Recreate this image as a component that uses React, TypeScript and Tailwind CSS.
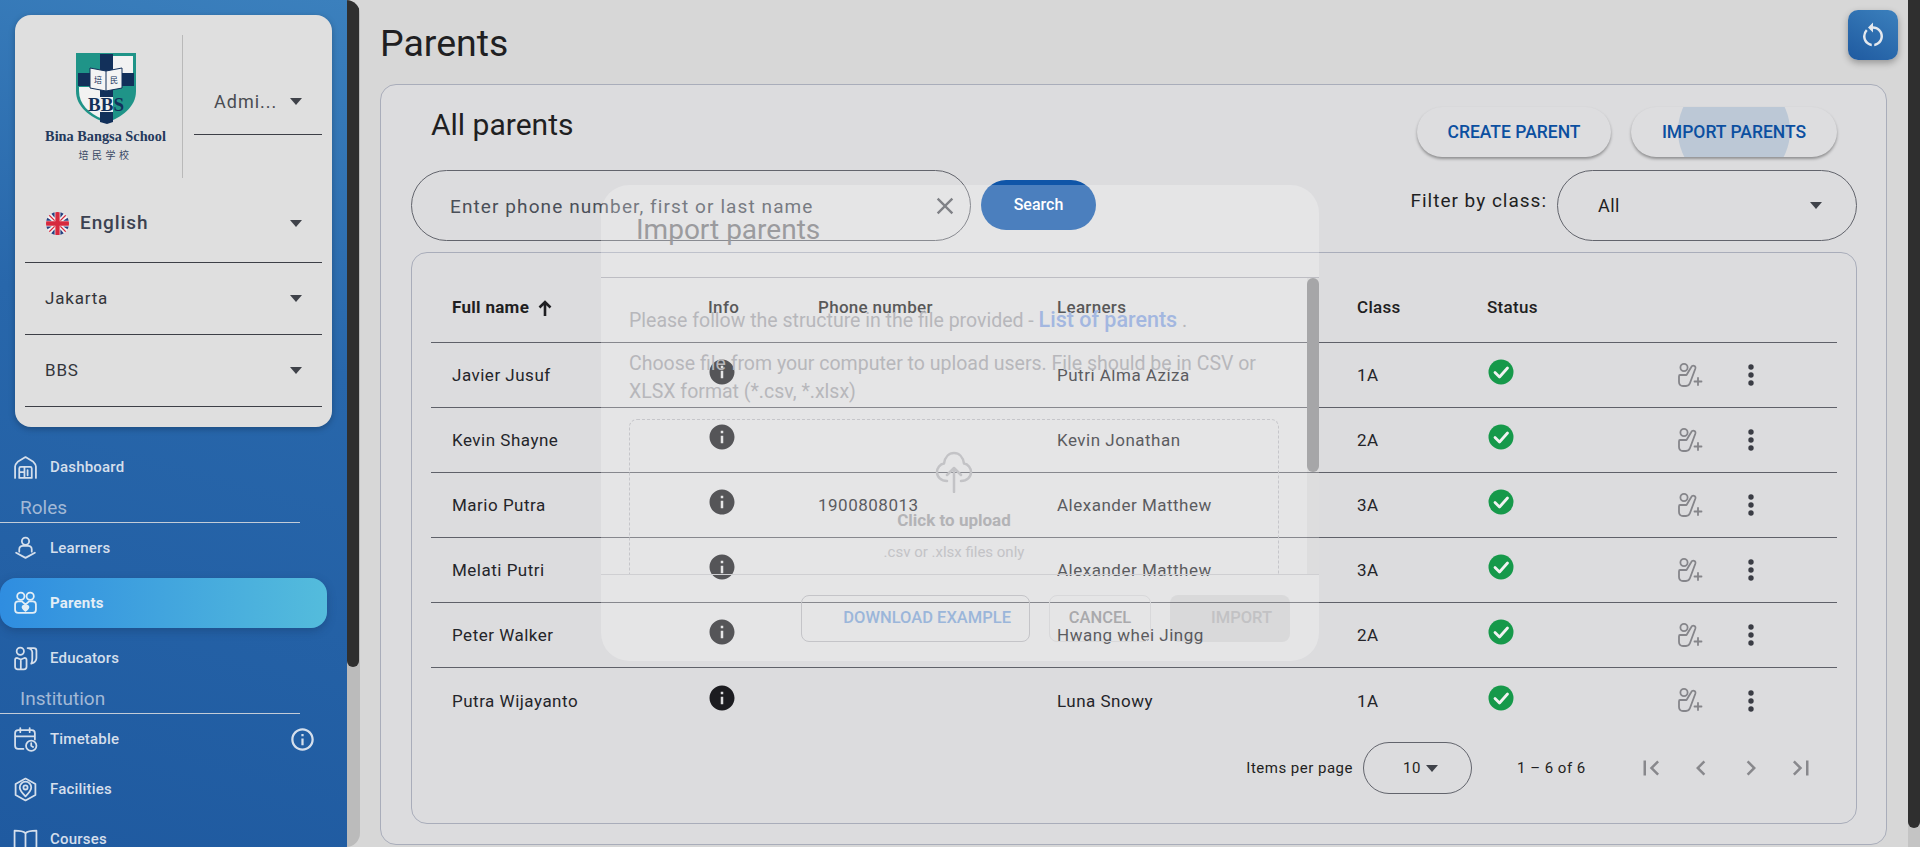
import React from "react"
import {
  MdChevronLeft,
  MdChevronRight,
  MdClose,
  MdFirstPage,
  MdInfo,
  MdLastPage,
  MdOutlineInfo,
  MdRestartAlt,
} from "react-icons/md"

const parents = [
  { name: "Javier Jusuf", phone: "", learner: "Putri Alma Aziza", cls: "1A" },
  { name: "Kevin Shayne", phone: "", learner: "Kevin Jonathan", cls: "2A" },
  { name: "Mario Putra", phone: "1900808013", learner: "Alexander Matthew", cls: "3A" },
  { name: "Melati Putri", phone: "", learner: "Alexander Matthew", cls: "3A" },
  { name: "Peter Walker", phone: "", learner: "Hwang whei Jingg", cls: "2A" },
  { name: "Putra Wijayanto", phone: "", learner: "Luna Snowy", cls: "1A" },
]

const Caret = ({ className = "" }: { className?: string }) => (
  <svg width="12" height="7" viewBox="0 0 12 7" className={`shrink-0 ${className}`}>
    <path d="M0 0h12L6 7z" fill="#3f4249" />
  </svg>
)

const Logo = () => (
  <div className="flex flex-col items-center">
    <svg width="62" height="72" viewBox="0 0 62 72">
      <path d="M1 1h60v38c0 16-14 26-30 32C15 65 1 55 1 39z" fill="#1f9488" />
      <path d="M34 4h24v18H34z" fill="#f2f2f2" />
      <path d="M4 35h24v32C14 62 4 52 4 39z" fill="#f2f2f2" />
      <path d="M25 2h13v68l-6 2-7-2z" fill="#12305a" />
      <path d="M3 21h56v13H3z" fill="#12305a" />
      <path d="M15 16l16 3 16-3v20l-16 3-16-3z" fill="#f4f4f4" stroke="#12305a" strokeWidth="1" />
      <path d="M31 19v20" stroke="#12305a" strokeWidth="1" />
      <text x="23" y="31" fontSize="8" textAnchor="middle" fill="#12305a" fontFamily="'Noto Sans CJK SC', serif">培</text>
      <text x="39" y="31" fontSize="8" textAnchor="middle" fill="#12305a" fontFamily="'Noto Sans CJK SC', serif">民</text>
      <rect x="25" y="45" width="13" height="15" fill="#f2f2f2" />
      <text x="31" y="59" fontSize="19" fontWeight="700" textAnchor="middle" fill="#12305a" fontFamily="'Liberation Serif', serif">BBS</text>
    </svg>
    <span className="mt-[3px] font-['Liberation_Serif',serif] text-[14.3px] leading-[18px] font-bold whitespace-nowrap text-[#24395c]">
      Bina Bangsa School
    </span>
    <span className="mt-[3px] font-['Noto_Sans_CJK_SC',serif] text-[10px] leading-[14px] tracking-[3.5px] text-[#3b4a66]">
      培民学校
    </span>
  </div>
)

const UkFlag = () => (
  <svg width="23" height="23" viewBox="0 0 24 24" className="shrink-0">
    <defs>
      <clipPath id="flag-clip">
        <circle cx="12" cy="12" r="12" />
      </clipPath>
    </defs>
    <g clipPath="url(#flag-clip)">
      <rect width="24" height="24" fill="#f4f4f4" />
      <path d="M4 0h5v6zM15 0h5l-5 6zM0 5l6 4H0zM24 5v4h-6zM0 15h6l-6 4zM18 15h6v4zM9 24H4l5-6zM20 24h-5v-6z" fill="#27407f" />
      <path d="M0 0l9 9M24 0l-9 9M0 24l9-9M24 24l-9-9" stroke="#d6293e" strokeWidth="1.4" />
      <path d="M12 0v24M0 12h24" stroke="#d6293e" strokeWidth="4.500" />
    </g>
  </svg>
)

const navIcons: Record<string, React.ReactNode> = {
  dashboard: (
    <>
      <path d="M2 22V11c0-2 1-3 2.500-4.500L12 2l7.500 4.500C21 8 22 9 22 11v11" />
      <path d="M6 22v-9c0-1 .6-1.500 1.500-1.500h9c.9 0 1.500.5 1.500 1.500v9zM6 16.500h5M11 11.500V22M14 14.500v5" />
    </>
  ),
  learners: (
    <>
      <circle cx="12" cy="5" r="3.500" />
      <path d="M6 15v-2c0-2 1.500-3.500 3.500-3.500h5c2 0 3.500 1.500 3.500 3.500v2" />
      <path d="M3 16l9 5 9-5" />
    </>
  ),
  parents: (
    <>
      <circle cx="7.500" cy="5" r="3.500" />
      <circle cx="16.500" cy="5" r="3.500" />
      <path d="M2 13c0-2 1-3 3-3h3.500l3.500 3 3.500-3H19c2 0 3 1 3 3v5c0 2-1 3-3 3H5c-2 0-3-1-3-3z" />
      <path d="M9.500 14.500c1-1 2-.5 2.500.5.500-1 1.500-1.500 2.500-.5s0 2.500-2.500 4.500c-2.500-2-3.500-3.500-2.500-4.500z" fill="currentColor" />
    </>
  ),
  educators: (
    <>
      <circle cx="7" cy="5" r="3.500" />
      <path d="M2 13.500c0-1 .7-2 2-2l3.500 1.500 3.500-1.500c1.300 0 2 1 2 2V20c0 1.500-1 2.500-2.500 2.500h-6C3 22.500 2 21.500 2 20zM7.500 13v9.500" />
      <path d="M14 2h6c1.500 0 2.500 1 2.500 2.500v7c0 2.500-2 4.500-5 5.500 1-1.500 1-3 1-4.500V6c0-2-2-4-4.500-4z" />
    </>
  ),
  timetable: (
    <>
      <path d="M10 21H5c-2 0-3-1-3-3V6c0-2 1-3 3-3h13c2 0 3 1 3 3v6M2 9h19M7 1v4M16 1v4" />
      <circle cx="17.500" cy="18" r="5" />
      <path d="M17.500 15.500V18l1.800 1.200" />
    </>
  ),
  facilities: (
    <>
      <path d="M12 1.500l9.500 5.200v10.600L12 22.500l-9.500-5.200V6.700z" />
      <path d="M12 18.500c-3-3-5.500-5.500-5.500-8.500a5.500 5.500 0 0 1 11 0c0 3-2.500 5.500-5.500 8.500z" />
      <circle cx="12" cy="10" r="2" />
    </>
  ),
  courses: <path d="M12 6C10 4 7 3.500 1.500 3.500v16.500c5.500 0 8.500.5 10.500 2 2-1.500 5-2 10.500-2V3.500C17 3.500 14 4 12 6zv16" />,
}

const NavItem = ({
  icon,
  label,
  active = false,
  info = false,
}: {
  icon: string
  label: string
  active?: boolean
  info?: boolean
}) => (
  <div
    className={`flex h-[50px] items-center ${
      active
        ? "mt-[5px] mb-[5px] w-[327px] rounded-[16px] bg-[linear-gradient(90deg,#2f8de0,#54bcdc)] font-bold text-[#e3eef6] shadow-[0_3px_8px_rgba(20,50,90,0.35)]"
        : "w-[327px] font-medium text-[#d5dfec]"
    }`}
  >
    <svg
      width="25"
      height="25"
      viewBox="0 0 24 24"
      fill="none"
      stroke="currentColor"
      strokeWidth="1.7"
      strokeLinecap="round"
      strokeLinejoin="round"
      className="ml-[13px] shrink-0"
    >
      {navIcons[icon]}
    </svg>
    <span className="ml-[12px] text-[15px] tracking-[0.2px]">{label}</span>
    {info && <MdOutlineInfo size={27} className="mr-[11px] ml-auto" />}
  </div>
)

const NavHeading = ({ label }: { label: string }) => (
  <div className="flex h-[31px] w-[300px] items-center border-b border-[#c3ccd8] pt-[3px] pl-[20px] text-[19px] text-[#a3b9d6]">
    {label}
  </div>
)

const AddIcon = () => (
  <svg width="26" height="25" viewBox="0 0 26 25" fill="none" stroke="#85858a" strokeWidth="1.8" strokeLinecap="round" strokeLinejoin="round">
    <circle cx="6" cy="4.500" r="3.600" />
    <path d="M2 12h6.500L13 4.500c.8-1.500 2-2 3-1.700 1.300.4 1.800 1.500 1.300 3L12 20c-.7 2-2 3-4 3H5c-2.500 0-4-1.500-4-4v-5.500c0-1 .5-1.500 1-1.500z" />
    <path d="M20 15v7M16.500 18.500h7" />
  </svg>
)

const StatusIcon = () => (
  <svg width="26" height="26" viewBox="0 0 26 26">
    <circle cx="13" cy="13" r="12.500" fill="#16994a" />
    <path d="M7 13.500l4.500 4.500L19.500 9" fill="none" stroke="#f2f2f2" strokeWidth="2.800" strokeLinecap="round" strokeLinejoin="round" />
  </svg>
)

const Kebab = () => (
  <svg width="6" height="22" viewBox="0 0 6 22" fill="#3a3c44">
    <circle cx="3" cy="3" r="2.700" />
    <circle cx="3" cy="11" r="2.700" />
    <circle cx="3" cy="19" r="2.700" />
  </svg>
)

const SortArrow = () => (
  <svg width="14" height="16" viewBox="0 0 14 16" fill="none" stroke="#1f1f22" strokeWidth="2.600">
    <path d="M7 16V2M1.500 7.500L7 2l5.500 5.500" />
  </svg>
)

const rowGrid = "grid grid-cols-[256px_110px_239px_300px_130px_191px_70px_1fr] items-center pl-[21px]"

const ImportModal = () => (
  <div className="absolute top-[185px] left-[601px] flex h-[476px] w-[718px] flex-col overflow-hidden rounded-[28px] bg-white/25 font-['Roboto',sans-serif]">
    <div className="h-[93px] border-b border-[#bdbdc3] pt-[26px] pl-[35px] text-[28px] leading-[38px] text-[#9b9b9e]">
      Import parents
    </div>
    <div className="relative h-[297px] overflow-hidden border-b border-[#cfcfd2] pt-[29px] pr-[39px] pl-[28px] text-[#b7b7bb]">
      <p className="flex h-[26px] items-baseline text-[19.5px] leading-[26px] whitespace-pre">
        Please follow the structure in the file provided -{" "}
        <span className="text-[21.5px] font-medium text-[#a3b7e0]">List of parents</span> .
      </p>
      <p className="mt-[17px] w-[650px] text-[19.5px] leading-[28px]">
        Choose file from your computer to upload users. File should be in CSV or XLSX format (*.csv, *.xlsx)
      </p>
      <div className="mt-[13px] flex h-[220px] w-[650px] flex-col items-center rounded-[8px] border border-dashed border-[#c6c6ca] pt-[31px]">
        <svg width="38" height="42" viewBox="0 0 38 42" fill="none" stroke="#c3c3c6" strokeWidth="2.500" strokeLinecap="round" strokeLinejoin="round">
          <path d="M12 30c-6 0-10-4-10-9 0-4 3-8 7-8.500C10 6 14 2 19 2s9 4 10 10.500c4 .5 7 4.500 7 8.500 0 5-4 9-10 9" />
          <path d="M19 41V17M12 24l7-7 7 7" />
        </svg>
        <span className="mt-[16px] text-[17px] leading-[22px] font-bold text-[#b3b3b6]">Click to upload</span>
        <span className="mt-[11px] text-[15px] leading-[20px] text-[#c3c3c6]">.csv or .xlsx files only</span>
      </div>
      <div className="absolute top-0 right-0 h-full w-[12px] bg-black/[0.03]">
        <div className="h-[194px] rounded-[6px] bg-[#a6a6a8]" />
      </div>
    </div>
    <div className="flex justify-end gap-[19px] pt-[20px] pr-[29px] text-[16.5px] font-medium">
      <div className="flex h-[47px] w-[229px] items-center justify-end rounded-[8px] border border-[#c4c4c8] pr-[18px] text-[#9bb6da]">
        DOWNLOAD EXAMPLE
      </div>
      <div className="flex h-[47px] w-[102px] items-center justify-center rounded-[8px] border border-[#d8d8da] text-[#a9a9ac]">
        CANCEL
      </div>
      <div className="flex h-[47px] w-[120px] items-center justify-end rounded-[8px] bg-black/5 pr-[18px] text-[#c2c2c4]">
        IMPORT
      </div>
    </div>
  </div>
)

export default function App() {
  return (
    <div className="relative flex h-[847px] w-[1920px] overflow-hidden bg-[#d7d7d7] font-['Roboto',sans-serif]">
      {/* Sidebar */}
      <aside className="flex h-full w-[360px] shrink-0 overflow-hidden rounded-r-[14px] bg-[#bbbbbb]">
        <div className="h-full w-[347px] shrink-0 overflow-hidden bg-[linear-gradient(15deg,#1f5aa0,#2867ab_60%,#3b80bd)]">
          <div className="mt-[15px] ml-[15px] h-[412px] w-[317px] rounded-[16px] bg-[#dfdfdf] shadow-[0_2px_6px_rgba(0,0,0,0.25)]">
            <div className="flex h-[184px] pt-[20px]">
              <div className="flex h-[143px] w-[168px] shrink-0 flex-col items-center justify-center border-r border-[#b9b9b9] pl-[14px]">
                <Logo />
              </div>
              <div className="ml-[11px] h-[100px] w-[128px] border-b border-[#3d3f46]">
                <div className="flex h-[100px] items-center pt-[32px] pr-[20px] pl-[20px] text-[18px] tracking-[1px] text-[#4a4c52]">
                  <span>Admi...</span>
                  <Caret className="ml-auto" />
                </div>
              </div>
            </div>
            <div className="mx-[10px] flex h-[64px] items-start border-b border-[#3d3f46] pt-[13px] pr-[20px] pl-[21px]">
              <UkFlag />
              <span className="ml-[11px] text-[19px] leading-[22px] font-medium tracking-[0.9px] text-[#3b4251]">English</span>
              <Caret className="mt-[8px] ml-auto" />
            </div>
            <div className="mx-[10px] flex h-[72px] items-center border-b border-[#3d3f46] pr-[20px] pl-[20px] text-[17px] tracking-[0.8px] text-[#33353b]">
              <span>Jakarta</span>
              <Caret className="ml-auto" />
            </div>
            <div className="mx-[10px] flex h-[72px] items-center border-b border-[#3d3f46] pr-[20px] pl-[20px] text-[17px] tracking-[0.8px] text-[#33353b]">
              <span>BBS</span>
              <Caret className="ml-auto" />
            </div>
          </div>
          <nav className="mt-[15px]">
            <NavItem icon="dashboard" label="Dashboard" />
            <NavHeading label="Roles" />
            <NavItem icon="learners" label="Learners" />
            <NavItem icon="parents" label="Parents" active />
            <NavItem icon="educators" label="Educators" />
            <NavHeading label="Institution" />
            <NavItem icon="timetable" label="Timetable" info />
            <NavItem icon="facilities" label="Facilities" />
            <NavItem icon="courses" label="Courses" />
          </nav>
        </div>
        <div className="h-[667px] w-[12px] rounded-b-[6px] bg-[#2f2f2f]" />
      </aside>

      {/* Main */}
      <main className="min-w-0 flex-1 pl-[20px]">
        <div className="flex h-[84px] items-start justify-between pr-[10px]">
          <h1 className="pt-[20px] text-[37.5px] leading-[46px] text-[#1f1f22]">Parents</h1>
          <div className="mt-[10px] flex h-[50px] w-[50px] items-center justify-center rounded-[10px] bg-[linear-gradient(30deg,#1f5aa0,#3b80bd)] text-[#e4e8ee] shadow-[0_3px_7px_rgba(0,0,0,0.3)]">
            <MdRestartAlt size={30} />
          </div>
        </div>

        <section className="mr-[21px] h-[761px] rounded-[16px] border border-[#a9adba] bg-[#dcdcde] pt-[22px] pl-[30px]">
          <div className="flex h-[50px] items-start justify-between pr-[49px] pl-[20px]">
            <h2 className="text-[30px] leading-[36px] text-[#1f1f22]">All parents</h2>
            <div className="flex gap-[20px] text-[17.5px] font-medium text-[#0b4fa0]">
              <button className="flex h-[50px] w-[194px] items-center justify-center rounded-full bg-[#dddddf] shadow-[0_2px_3px_rgba(0,0,0,0.35)]">
                CREATE PARENT
              </button>
              <button className="relative flex h-[50px] w-[206px] items-center justify-center overflow-hidden rounded-full bg-[#dddddf] shadow-[0_2px_3px_rgba(0,0,0,0.35)]">
                <span className="absolute top-[-32px] left-[47px] h-[112px] w-[112px] rounded-full bg-[#bcc8d6]" />
                <span className="relative">IMPORT PARENTS</span>
              </button>
            </div>
          </div>

          <div className="mt-[13px] flex h-[71px] w-[1446px] items-start">
            <div className="flex h-[71px] w-[560px] items-center rounded-full border border-[#62646c] pr-[11px] pl-[38px]">
              <span className="pt-[3px] text-[19px] tracking-[1.1px] text-[#4a4f58]">Enter phone number, first or last name</span>
              <MdClose size={28} className="ml-auto text-[#55575e]" />
            </div>
            <button className="mt-[10px] ml-[10px] h-[50px] w-[115px] rounded-full bg-[#0f55a8] text-[16px] font-medium text-white">
              Search
            </button>
            <span className="mt-[19px] ml-auto text-[19px] leading-[24px] tracking-[1px] text-[#1f1f22]">Filter by class:</span>
            <div className="ml-[10px] flex h-[71px] w-[300px] items-center rounded-full border border-[#62646c] pr-[34px] pl-[40px] text-[18px] tracking-[0.5px] text-[#1f1f22]">
              <span>All</span>
              <Caret className="ml-auto" />
            </div>
          </div>

          <div className="mt-[11px] h-[572px] w-[1446px] rounded-[16px] border border-[#a9adba] px-[19px]">
            <div className={`${rowGrid} h-[90px] border-b border-[#5f6169] pt-[20px] text-[17px] font-medium tracking-[0.3px] text-[#1f1f22]`}>
              <div className="flex items-center gap-[9px] font-bold">
                Full name <SortArrow />
              </div>
              <div>Info</div>
              <div>Phone number</div>
              <div>Learners</div>
              <div>Class</div>
              <div>Status</div>
            </div>
            {parents.map((p, i) => {
              const last = i === parents.length - 1
              return (
                <div
                  key={p.name}
                  className={`${rowGrid} h-[65px] text-[17px] tracking-[0.5px] text-[#24252a] ${last ? "" : "border-b border-[#5f6169]"}`}
                >
                  <div className="pt-[2px]">{p.name}</div>
                  <div className="-mt-[6px] -ml-[1px]">
                    <MdInfo size={30} className="text-[#1c1c20]" />
                  </div>
                  <div className="pt-[2px]">{p.phone}</div>
                  <div className="pt-[2px]">{p.learner}</div>
                  <div className="pt-[2px]">{p.cls}</div>
                  <div className="-mt-[6px] ml-[1px]">
                    <StatusIcon />
                  </div>
                  <div>
                    <AddIcon />
                  </div>
                  <div>
                    <Kebab />
                  </div>
                </div>
              )
            })}
            <div className="mt-[9px] flex h-[52px] items-center justify-end pr-[11px] text-[15px] tracking-[0.5px] text-[#1f1f22]">
              <span>Items per page</span>
              <div className="ml-[10px] flex h-[52px] w-[109px] items-center rounded-full border border-[#62646c] pl-[39px]">
                <span>10</span>
                <Caret className="ml-[5px]" />
              </div>
              <span className="ml-[45px] w-[109px]">1 – 6 of 6</span>
              <div className="flex text-[#88888c]">
                <span className="flex w-[50px] justify-center"><MdFirstPage size={30} /></span>
                <span className="flex w-[50px] justify-center"><MdChevronLeft size={30} /></span>
                <span className="flex w-[50px] justify-center"><MdChevronRight size={30} /></span>
                <span className="flex w-[50px] justify-center"><MdLastPage size={30} /></span>
              </div>
            </div>
          </div>
        </section>
      </main>

      {/* Page scrollbar */}
      <div className="h-full w-[12px] shrink-0 bg-[#c4c4c4]">
        <div className="h-[828px] rounded-b-[6px] bg-[#2f2f2f]" />
      </div>

      <ImportModal />
    </div>
  )
}
